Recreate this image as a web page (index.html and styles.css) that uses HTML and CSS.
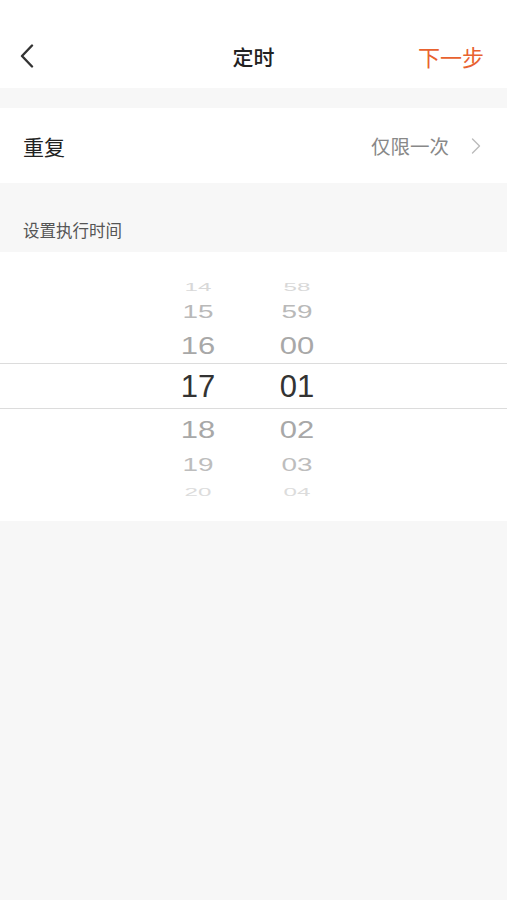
FILE: index.html
```html
<!DOCTYPE html>
<html lang="zh">
<head>
<meta charset="utf-8">
<title>定时</title>
<link rel="stylesheet" href="styles.css">
</head>
<body>
<div class="page">
  <header class="nav">
    <span class="back">
      <svg width="14" height="24" viewBox="0 0 14 24"><path d="M12 1.5 L2 12 L12 22.5" fill="none" stroke="#333" stroke-width="2.4" stroke-linecap="round" stroke-linejoin="round"/></svg>
    </span>
    <span class="title">定时</span>
    <span class="next">下一步</span>
  </header>

  <div class="gap"></div>

  <div class="row">
    <span class="row-label">重复</span>
    <span class="row-value">仅限一次</span>
    <svg class="chev" width="10" height="16" viewBox="0 0 10 16"><path d="M1.5 1 L8.5 8 L1.5 15" fill="none" stroke="#bbb" stroke-width="1.4" stroke-linecap="round" stroke-linejoin="round"/></svg>
  </div>

  <div class="section-label">设置执行时间</div>

  <div class="picker">
    <div class="cols r14"><span>14</span><span>58</span></div>
    <div class="cols r15"><span>15</span><span>59</span></div>
    <div class="cols r16"><span>16</span><span>00</span></div>
    <div class="cols sel"><span>17</span><span>01</span></div>
    <div class="cols r18"><span>18</span><span>02</span></div>
    <div class="cols r19"><span>19</span><span>03</span></div>
    <div class="cols r20"><span>20</span><span>04</span></div>
  </div>
</div>
</body>
</html>
```

FILE: styles.css
```css
* { box-sizing: border-box; }
html, body { margin: 0; padding: 0; }
body {
  background: #f7f7f7;
  font-family: "Noto Sans CJK SC", "Liberation Sans", sans-serif;
}
.page { min-height: 900px; background: #f7f7f7; }

.nav {
  height: 88px;
  background: #fff;
  padding: 24px 23px 0 20px;
  display: flex;
  align-items: center;
  justify-content: space-between;
  position: relative;
}
.nav > * { height: 64px; display: flex; align-items: center; }
.back { width: 60px; }
.title {
  font-size: 21px;
  font-weight: 500;
  color: #222;
  position: absolute;
  left: 50%;
  transform: translateX(-50%);
  top: 24px;
}
.next {
  font-size: 22px;
  color: #e8622f;
}

.gap { height: 20px; }

.row {
  height: 75px;
  background: #fff;
  display: flex;
  align-items: center;
  padding: 0 26px 0 23px;
}
.row-label { font-size: 21px; color: #222; flex: 1; }
.row-value { font-size: 19.5px; color: #888; margin-right: 22px; }
.chev { display: block; }

.section-label {
  height: 69px;
  padding: 36px 0 0 23px;
  font-size: 16.5px;
  color: #555;
  line-height: 22px;
}

.picker {
  background: #fff;
  padding: 20px 0 20px 0;
  display: flex;
  flex-direction: column;
  font-family: "Liberation Sans", Arial, sans-serif;
  font-size: 31px;
}
.cols {
  display: grid;
  grid-template-columns: 80px 80px;
  column-gap: 19px;
  padding-left: 158px;
  align-items: center;
}
.cols span {
  text-align: center;
  display: block;
  line-height: 1;
}
.r14 { height: 24px; color: #d8d8d8; padding-bottom: 7px; }
.r14 span { transform: scale(0.78, 0.38); }
.r15 { height: 28px; color: #b9b9b9; padding-bottom: 2px; }
.r15 span { transform: scale(0.9, 0.58); }
.r16 { height: 39px; color: #a8a8a8; padding-top: 4px; }
.r16 span { transform: scale(1, 0.8); }
.sel {
  height: 46px;
  color: #333;
  border-top: 1px solid #dcdcdc;
  border-bottom: 1px solid #dcdcdc;
}
.r18 { height: 40px; color: #a8a8a8; }
.r18 span { transform: scale(1, 0.8); }
.r19 { height: 28px; color: #bdbdbd; padding-bottom: 2px; }
.r19 span { transform: scale(0.9, 0.58); }
.r20 { height: 24px; color: #dcdcdc; padding-bottom: 6px; }
.r20 span { transform: scale(0.78, 0.38); }
```
